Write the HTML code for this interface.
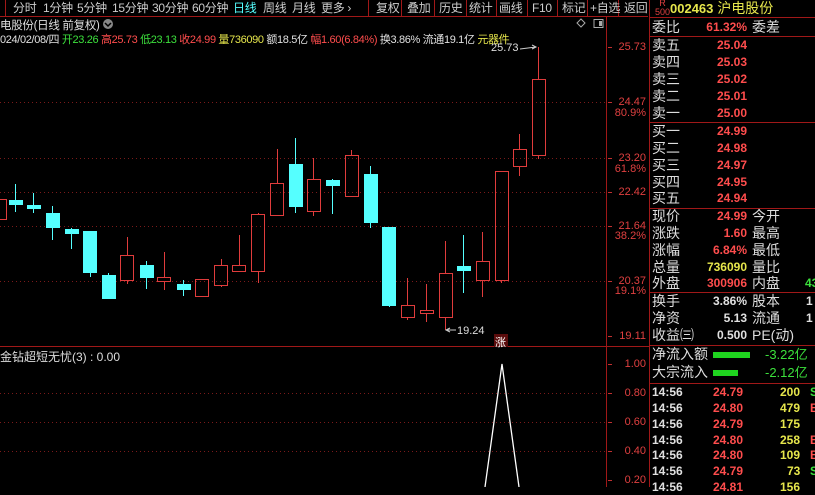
<!DOCTYPE html>
<html><head><meta charset="utf-8"><style>
*{margin:0;padding:0;box-sizing:border-box}
body{width:815px;height:487px;background:#000;overflow:hidden;position:relative;font-family:"Liberation Sans","Noto Sans CJK SC",sans-serif;color:#ddd}
.a{position:absolute;white-space:nowrap}
.tab{font-size:12px;color:#ccc;top:0;height:16px;line-height:16px;letter-spacing:-0.3px}
.lb{font-size:14px;color:#ddd;left:652px;line-height:17px}
.lb2{font-size:14px;color:#ddd;left:752px;line-height:17px}
.nm{font-size:12px;font-weight:bold;right:68px;line-height:17px;text-align:right}
.r{color:#ff4d4d}.g{color:#3ce03c}.y{color:#e6e64c}.w{color:#e0e0e0}.c{color:#5ff}
.ax{font-size:11px;color:#e04040;right:169px;text-align:right;line-height:11px}
.tr{font-size:12px;font-weight:bold;line-height:16px}
</style></head><body>
<svg class="a" style="left:0;top:0" width="815" height="487">
<rect x="0" y="0" width="815" height="16" fill="#000"/>
<line x1="0" y1="16.5" x2="648" y2="16.5" stroke="#a01818"/>
<g stroke="#a01818">
<line x1="5.5" y1="0" x2="5.5" y2="16"/><line x1="368.5" y1="0" x2="368.5" y2="16"/><line x1="401.5" y1="0" x2="401.5" y2="16"/><line x1="434.5" y1="0" x2="434.5" y2="16"/><line x1="466.5" y1="0" x2="466.5" y2="16"/><line x1="496.5" y1="0" x2="496.5" y2="16"/><line x1="527.5" y1="0" x2="527.5" y2="16"/><line x1="557.5" y1="0" x2="557.5" y2="16"/><line x1="587.5" y1="0" x2="587.5" y2="16"/><line x1="618.5" y1="0" x2="618.5" y2="16"/>
</g>
<line x1="606.5" y1="17" x2="606.5" y2="487" stroke="#a01818"/>
<line x1="649.5" y1="0" x2="649.5" y2="487" stroke="#a01818"/>
<line x1="0" y1="346.5" x2="649" y2="346.5" stroke="#a01818"/>
<g stroke="#a01818">
<line x1="650" y1="17.5" x2="815" y2="17.5"/><line x1="650" y1="36.5" x2="815" y2="36.5"/><line x1="650" y1="122.5" x2="815" y2="122.5"/><line x1="650" y1="208.5" x2="815" y2="208.5"/><line x1="650" y1="292.5" x2="815" y2="292.5"/><line x1="650" y1="345.5" x2="815" y2="345.5"/><line x1="650" y1="383.5" x2="815" y2="383.5"/>
</g>
<g stroke="#7a1a1a" stroke-dasharray="1,3">
<line x1="0" y1="102.5" x2="606" y2="102.5"/><line x1="0" y1="158.5" x2="606" y2="158.5"/><line x1="0" y1="192.5" x2="606" y2="192.5"/><line x1="0" y1="226.5" x2="606" y2="226.5"/><line x1="0" y1="281.5" x2="606" y2="281.5"/>
<line x1="0" y1="393.5" x2="606" y2="393.5"/><line x1="0" y1="422.5" x2="606" y2="422.5"/><line x1="0" y1="451.5" x2="606" y2="451.5"/>
</g>
<g stroke="#c03030">
<line x1="608" y1="47.5" x2="612" y2="47.5"/><line x1="608" y1="102.5" x2="612" y2="102.5"/><line x1="608" y1="158.5" x2="612" y2="158.5"/><line x1="608" y1="192.5" x2="612" y2="192.5"/><line x1="608" y1="226.5" x2="612" y2="226.5"/><line x1="608" y1="281.5" x2="612" y2="281.5"/><line x1="608" y1="336.5" x2="612" y2="336.5"/>
<line x1="608" y1="364.5" x2="612" y2="364.5"/><line x1="608" y1="393.5" x2="612" y2="393.5"/><line x1="608" y1="422.5" x2="612" y2="422.5"/><line x1="608" y1="451.5" x2="612" y2="451.5"/><line x1="608" y1="480.5" x2="612" y2="480.5"/>
</g>
<g stroke="#e03c3c" fill="none">
<rect x="-6.5" y="199.5" width="13" height="20"/>
<line x1="127.5" y1="237" x2="127.5" y2="255"/><line x1="127.5" y1="280" x2="127.5" y2="284"/><rect x="120.5" y="255.5" width="13" height="25"/>
<line x1="164.5" y1="252" x2="164.5" y2="277"/><line x1="164.5" y1="281" x2="164.5" y2="290"/><rect x="157.5" y="277.5" width="13" height="4"/>
<rect x="195.5" y="279.5" width="13" height="17"/>
<line x1="221.5" y1="259" x2="221.5" y2="265"/><line x1="221.5" y1="285" x2="221.5" y2="287"/><rect x="214.5" y="265.5" width="13" height="20"/>
<line x1="239.5" y1="235" x2="239.5" y2="265"/><rect x="232.5" y="265.5" width="13" height="6"/>
<line x1="258.5" y1="213" x2="258.5" y2="214"/><line x1="258.5" y1="271" x2="258.5" y2="283"/><rect x="251.5" y="214.5" width="13" height="57"/>
<line x1="277.5" y1="149" x2="277.5" y2="183"/><rect x="270.5" y="183.5" width="13" height="32"/>
<line x1="313.5" y1="158" x2="313.5" y2="179"/><line x1="313.5" y1="211" x2="313.5" y2="216"/><rect x="307.5" y="179.5" width="13" height="32"/>
<line x1="351.5" y1="150" x2="351.5" y2="155"/><rect x="345.5" y="155.5" width="13" height="41"/>
<line x1="407.5" y1="278" x2="407.5" y2="305"/><line x1="407.5" y1="317" x2="407.5" y2="320"/><rect x="401.5" y="305.5" width="13" height="12"/>
<line x1="426.5" y1="284" x2="426.5" y2="310"/><line x1="426.5" y1="313" x2="426.5" y2="322"/><rect x="420.5" y="310.5" width="13" height="3"/>
<line x1="445.5" y1="241" x2="445.5" y2="273"/><line x1="445.5" y1="317" x2="445.5" y2="330"/><rect x="439.5" y="273.5" width="13" height="44"/>
<line x1="482.5" y1="232" x2="482.5" y2="261"/><line x1="482.5" y1="280" x2="482.5" y2="297"/><rect x="476.5" y="261.5" width="13" height="19"/>
<line x1="501.5" y1="280" x2="501.5" y2="283"/><rect x="495.5" y="171.5" width="13" height="109"/>
<line x1="519.5" y1="134" x2="519.5" y2="149"/><line x1="519.5" y1="166" x2="519.5" y2="176"/><rect x="513.5" y="149.5" width="13" height="17"/>
<line x1="538.5" y1="47" x2="538.5" y2="79"/><line x1="538.5" y1="155" x2="538.5" y2="159"/><rect x="532.5" y="79.5" width="13" height="76"/>
</g>
<g fill="#5ff" stroke="#5ff">
<line x1="15.5" y1="184" x2="15.5" y2="212"/><rect x="9.5" y="200.5" width="13" height="4"/>
<line x1="33.5" y1="193" x2="33.5" y2="213"/><rect x="27.5" y="205.5" width="13" height="3"/>
<line x1="52.5" y1="206" x2="52.5" y2="240"/><rect x="46.5" y="213.5" width="13" height="14"/>
<line x1="71.5" y1="228" x2="71.5" y2="249"/><rect x="65.5" y="229.5" width="13" height="4"/>
<line x1="90.5" y1="231" x2="90.5" y2="277"/><rect x="83.5" y="231.5" width="13" height="41"/>
<line x1="108.5" y1="273" x2="108.5" y2="298"/><rect x="102.5" y="275.5" width="13" height="23"/>
<line x1="146.5" y1="261" x2="146.5" y2="289"/><rect x="140.5" y="265.5" width="13" height="12"/>
<line x1="183.5" y1="280" x2="183.5" y2="296"/><rect x="177.5" y="284.5" width="13" height="5"/>
<line x1="295.5" y1="138" x2="295.5" y2="213"/><rect x="289.5" y="164.5" width="13" height="42"/>
<line x1="332.5" y1="179" x2="332.5" y2="214"/><rect x="326.5" y="180.5" width="13" height="5"/>
<line x1="370.5" y1="166" x2="370.5" y2="228"/><rect x="364.5" y="174.5" width="13" height="48"/>
<line x1="389.5" y1="227" x2="389.5" y2="307"/><rect x="382.5" y="227.5" width="13" height="78"/>
<line x1="463.5" y1="235" x2="463.5" y2="293"/><rect x="457.5" y="266.5" width="13" height="4"/>
</g>
<g stroke="#ccc" fill="none"><line x1="520" y1="49" x2="536" y2="47"/><path d="M532 45 L536 47 L532 49"/>
<line x1="447" y1="330" x2="456" y2="330"/><path d="M450 328 L446 330 L450 332"/></g>
<rect x="494" y="334" width="14" height="13" fill="#5a0c0c"/>
<polyline points="485,487 502,364 519,487" stroke="#fff" stroke-width="1.3" fill="none"/>
<rect x="713" y="352" width="37" height="6" fill="#1fd41f"/>
<rect x="713" y="370" width="25" height="6" fill="#1fd41f"/>
<path d="M581 19 L585 23 L581 27 L577 23 Z" stroke="#aaa" fill="none"/>
<rect x="594" y="19.5" width="9" height="8" stroke="#aaa" fill="none"/><rect x="599" y="21" width="3" height="5" fill="#aaa"/>
<circle cx="108" cy="24" r="5" fill="#888"/><path d="M105 23 L108 26 L111 23" stroke="#000" stroke-width="1.5" fill="none"/>
</svg>
<div class="a tab" style="left:13px">分时</div>
<div class="a tab" style="left:43px">1分钟</div>
<div class="a tab" style="left:77px">5分钟</div>
<div class="a tab" style="left:112px">15分钟</div>
<div class="a tab" style="left:152px">30分钟</div>
<div class="a tab" style="left:192px">60分钟</div>
<div class="a tab" style="left:233px;color:#5ff">日线</div>
<div class="a tab" style="left:263px">周线</div>
<div class="a tab" style="left:292px">月线</div>
<div class="a tab" style="left:321px">更多 ›</div>
<div class="a tab" style="left:376px">复权</div>
<div class="a tab" style="left:407px">叠加</div>
<div class="a tab" style="left:439px">历史</div>
<div class="a tab" style="left:469px">统计</div>
<div class="a tab" style="left:499px">画线</div>
<div class="a tab" style="left:532px">F10</div>
<div class="a tab" style="left:562px">标记</div>
<div class="a tab" style="left:590px">+自选</div>
<div class="a tab" style="left:624px">返回</div>
<div class="a" style="left:0;top:17px;font-size:11.5px;color:#ddd;letter-spacing:-0.3px">电股份(日线 前复权)</div>
<div class="a" style="left:0;top:31px;font-size:11px;letter-spacing:-0.35px"><span class="w">024/02/08/四 </span><span class="g">开23.26 </span><span class="r">高25.73 </span><span class="g">低23.13 </span><span class="r">收24.99 </span><span class="y">量736090 </span><span class="w">额18.5亿 </span><span class="r">幅1.60(6.84%) </span><span class="w">换3.86% 流通19.1亿 </span><span class="y">元器件</span></div>
<div class="a" style="left:491px;top:42px;font-size:11px;color:#ddd">25.73</div>
<div class="a" style="left:457px;top:325px;font-size:11px;color:#ddd">19.24</div>
<div class="a" style="left:495px;top:334px;font-size:11px;color:#fff">涨</div>
<div class="a" style="left:0;top:348px;font-size:12px;color:#ddd">金钻超短无忧(3) : 0.00</div>
<div class="a ax" style="top:42px">25.73</div>
<div class="a ax" style="top:97px">24.47</div><div class="a ax" style="top:108px">80.9%</div>
<div class="a ax" style="top:153px">23.20</div><div class="a ax" style="top:164px">61.8%</div>
<div class="a ax" style="top:187px">22.42</div>
<div class="a ax" style="top:221px">21.64</div><div class="a ax" style="top:231px">38.2%</div>
<div class="a ax" style="top:276px">20.37</div><div class="a ax" style="top:286px">19.1%</div>
<div class="a ax" style="top:331px">19.11</div>
<div class="a ax" style="top:359px">1.00</div><div class="a ax" style="top:388px">0.80</div><div class="a ax" style="top:417px">0.60</div><div class="a ax" style="top:446px">0.40</div><div class="a ax" style="top:475px">0.20</div>
<div class="a" style="left:655px;top:-1px;font-size:9px;color:#e04040;line-height:9px;text-align:center">R<br>500</div>
<div class="a" style="left:670px;top:0;font-size:14px;color:#e6e64c;line-height:17px"><b style="font-size:13px">002463</b> 沪电股份</div>
<div class="a lb" style="top:19px">委比</div><div class="a nm r" style="top:19px">61.32%</div><div class="a lb2" style="top:19px">委差</div>
<div class="a lb" style="top:37px">卖五</div><div class="a nm r" style="top:37px">25.04</div>
<div class="a lb" style="top:54px">卖四</div><div class="a nm r" style="top:54px">25.03</div>
<div class="a lb" style="top:71px">卖三</div><div class="a nm r" style="top:71px">25.02</div>
<div class="a lb" style="top:88px">卖二</div><div class="a nm r" style="top:88px">25.01</div>
<div class="a lb" style="top:105px">卖一</div><div class="a nm r" style="top:105px">25.00</div>
<div class="a lb" style="top:123px">买一</div><div class="a nm r" style="top:123px">24.99</div>
<div class="a lb" style="top:140px">买二</div><div class="a nm r" style="top:140px">24.98</div>
<div class="a lb" style="top:157px">买三</div><div class="a nm r" style="top:157px">24.97</div>
<div class="a lb" style="top:174px">买四</div><div class="a nm r" style="top:174px">24.95</div>
<div class="a lb" style="top:190px">买五</div><div class="a nm r" style="top:190px">24.94</div>
<div class="a lb" style="top:208px">现价</div><div class="a nm r" style="top:208px">24.99</div><div class="a lb2" style="top:208px">今开</div>
<div class="a lb" style="top:225px">涨跌</div><div class="a nm r" style="top:225px">1.60</div><div class="a lb2" style="top:225px">最高</div>
<div class="a lb" style="top:242px">涨幅</div><div class="a nm r" style="top:242px">6.84%</div><div class="a lb2" style="top:242px">最低</div>
<div class="a lb" style="top:259px">总量</div><div class="a nm y" style="top:259px">736090</div><div class="a lb2" style="top:259px">量比</div>
<div class="a lb" style="top:275px">外盘</div><div class="a nm r" style="top:275px">300906</div><div class="a lb2" style="top:275px">内盘</div><div class="a nm g" style="top:275px;right:0;left:805px">43</div>
<div class="a lb" style="top:293px">换手</div><div class="a nm w" style="top:293px">3.86%</div><div class="a lb2" style="top:293px">股本</div><div class="a nm w" style="top:293px;left:806px">1</div>
<div class="a lb" style="top:310px">净资</div><div class="a nm w" style="top:310px">5.13</div><div class="a lb2" style="top:310px">流通</div><div class="a nm w" style="top:310px;left:806px">1</div>
<div class="a lb" style="top:327px">收益㈢</div><div class="a nm w" style="top:327px">0.500</div><div class="a lb2" style="top:327px">PE(动)</div>
<div class="a lb" style="top:346px">净流入额</div><div class="a g" style="top:346px;left:765px;font-size:13px;line-height:17px">-3.22亿</div>
<div class="a lb" style="top:364px">大宗流入</div><div class="a g" style="top:364px;left:765px;font-size:13px;line-height:17px">-2.12亿</div>
<div class="a tr w" style="left:652px;top:384px">14:56</div><div class="a tr r" style="left:713px;top:384px">24.79</div><div class="a tr y" style="left:780px;top:384px">200</div><div class="a tr g" style="left:810px;top:384px">S</div>
<div class="a tr w" style="left:652px;top:400px">14:56</div><div class="a tr r" style="left:713px;top:400px">24.80</div><div class="a tr y" style="left:780px;top:400px">479</div><div class="a tr r" style="left:810px;top:400px">B</div>
<div class="a tr w" style="left:652px;top:416px">14:56</div><div class="a tr r" style="left:713px;top:416px">24.79</div><div class="a tr y" style="left:780px;top:416px">175</div>
<div class="a tr w" style="left:652px;top:432px">14:56</div><div class="a tr r" style="left:713px;top:432px">24.80</div><div class="a tr y" style="left:780px;top:432px">258</div><div class="a tr r" style="left:810px;top:432px">B</div>
<div class="a tr w" style="left:652px;top:447px">14:56</div><div class="a tr r" style="left:713px;top:447px">24.80</div><div class="a tr y" style="left:780px;top:447px">109</div><div class="a tr r" style="left:810px;top:447px">B</div>
<div class="a tr w" style="left:652px;top:463px">14:56</div><div class="a tr r" style="left:713px;top:463px">24.79</div><div class="a tr y" style="left:787px;top:463px">73</div><div class="a tr g" style="left:810px;top:463px">S</div>
<div class="a tr w" style="left:652px;top:479px">14:56</div><div class="a tr r" style="left:713px;top:479px">24.81</div><div class="a tr y" style="left:780px;top:479px">156</div>
</body></html>
